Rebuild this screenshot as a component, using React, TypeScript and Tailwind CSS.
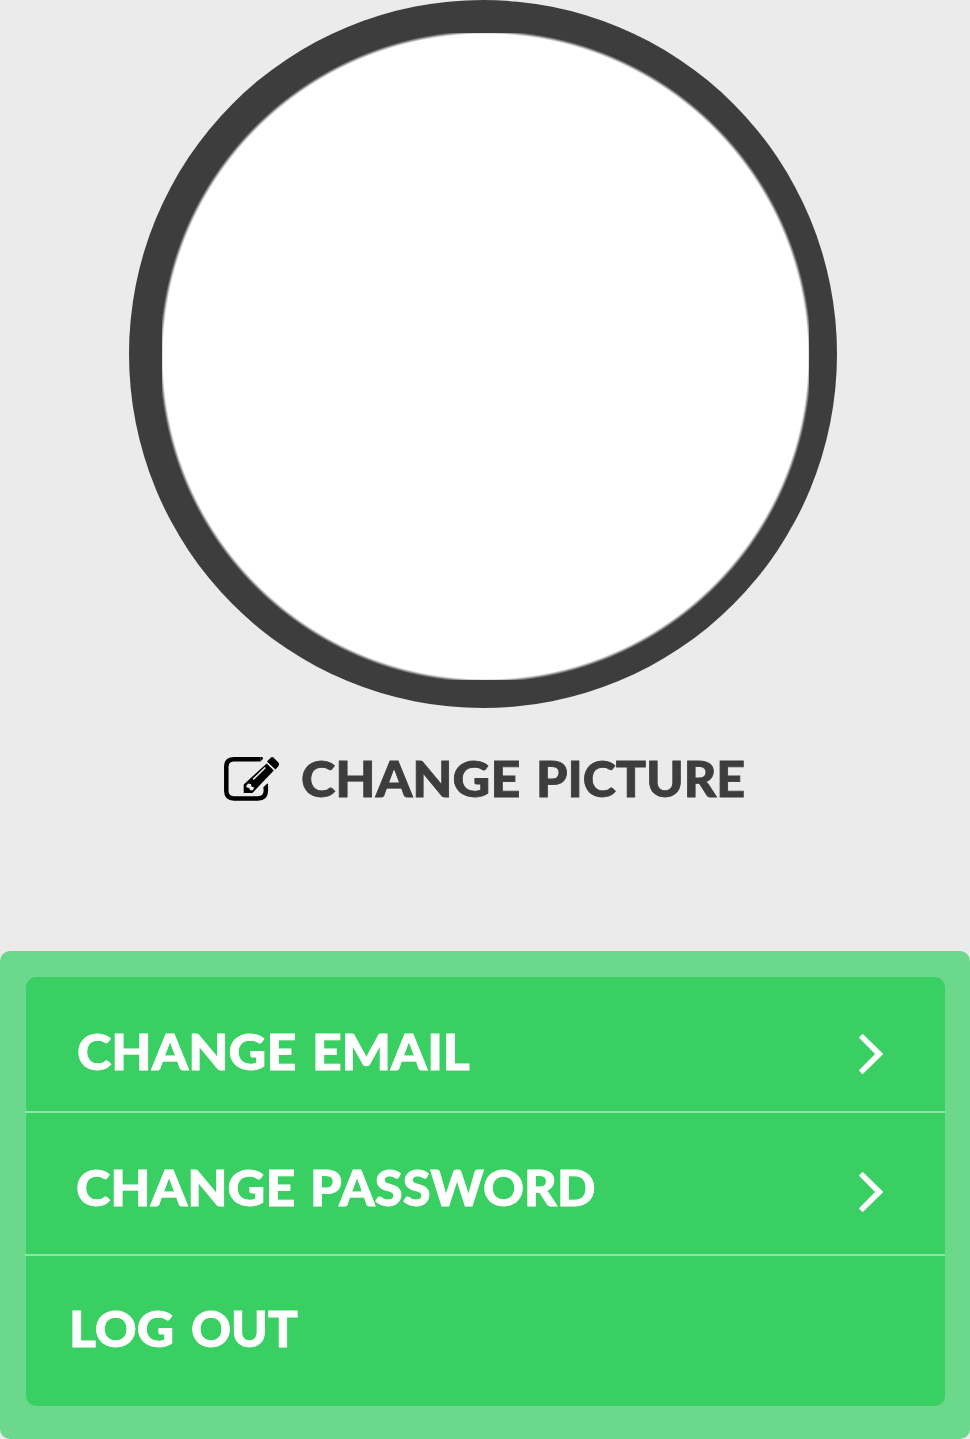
const LABEL =
  "font-['Lato',sans-serif] font-black text-[48.5px] leading-[60px] whitespace-nowrap [-webkit-text-stroke:0.8px_currentColor]";

function Chevron() {
  return (
    <svg className="h-[42px] w-[26px] shrink-0" viewBox="0 0 26 42">
      <path
        d="M1.700 4.500L4.700 1.600L24.400 21L4.700 40.400L1.700 37.500L18 21Z"
        fill="#ffffff"
        stroke="#ffffff"
        strokeWidth="1.200"
        strokeLinejoin="round"
      />
    </svg>
  );
}

function EditIcon() {
  return (
    <svg className="h-[46px] w-[57px] shrink-0" viewBox="0 0 57 46">
      <path
        d="M36.500 3.200H10Q2.300 3.200 2.300 10.500V35Q2.300 42.400 10 42.400H34Q41.800 42.400 41.800 35V31.500"
        fill="none"
        stroke="#000000"
        strokeWidth="4.500"
      />
      <path fill="#000000" d="M36.400 .95H38.400L39.200 2.400L36.400 5.450Z" />
      <path fill="#000000" d="M39.550 31L43 27.700Q44.050 27.300 44.050 28.500V32.500H39.550Z" />
      <path
        fillRule="evenodd"
        fill="#000000"
        d="M42.700 7.500L49.800 14.600L28.400 37L19.700 37L19.700 28.500ZM28.600 22.800L40.800 10.900L41.900 12L29.700 24ZM24.400 27.500L27 28.300L27.700 30.800L30.300 31.500L28.800 34.300L26.300 34.300L25 31.900L22.300 31.200L22.500 29.200Z"
      />
      <path fill="#000000" d="M43 5.500L46.400 1.900Q48.200 .3 49.900 1.900L54.100 6.200Q55.800 8.200 54.500 10L51.400 13.400Z" />
    </svg>
  );
}

export default function App() {
  return (
    <main className="flex h-[1439px] w-[970px] flex-col overflow-hidden bg-[#ebebeb]">
      <div className="ml-[129px] h-[708px] w-[708px] shrink-0 rounded-full bg-[#3d3d3d] pt-[33px] pl-[33px]">
        <div className="size-[647px] bg-[radial-gradient(circle_at_center,#fff_322.500px,transparent_326px)]" />
      </div>

      <button className="mt-[40px] ml-[224px] flex h-[60px] shrink-0 items-center self-start">
        <span className="mt-[2px]"><EditIcon /></span>
        <span className={`${LABEL} ml-[20px] flex gap-[31px] text-[#3d3d3d]`}>
          <span className="origin-left scale-x-[1.075]">CHANGE</span>
          <span className="origin-left scale-x-[1.036]">PICTURE</span>
        </span>
      </button>

      <section className="mt-[143px] h-[488px] shrink-0 rounded-[10px] bg-[#6bd88b] pt-[26px] pr-[25px] pl-[25px]">
        <nav className="flex h-[429px] flex-col">
          <button className="ml-px flex h-[134px] items-start justify-between rounded-t-[10px] bg-[#3acf63] pt-[44px] pr-[61px] pl-[51px] text-white">
            <span className={`${LABEL} flex gap-[31px]`}>
              <span className="origin-left scale-x-[1.075]">CHANGE</span>
              <span className="origin-left scale-x-[1.066]">EMAIL</span>
            </span>
            <span className="mt-[12px]"><Chevron /></span>
          </button>
          <div className="h-[2px] shrink-0 bg-[#90e4a9]" />
          <button className="ml-px flex h-[141px] items-start justify-between bg-[#3acf63] pt-[44px] pr-[61px] pl-[50px] text-white">
            <span className={`${LABEL} flex gap-[30px]`}>
              <span className="origin-left scale-x-[1.075]">CHANGE</span>
              <span className="origin-left scale-x-[1.044]">PASSWORD</span>
            </span>
            <span className="mt-[14px]"><Chevron /></span>
          </button>
          <div className="h-[2px] shrink-0 bg-[#90e4a9]" />
          <button className="ml-px flex h-[150px] items-start rounded-b-[10px] bg-[#3acf63] pt-[42px] pl-[43px] text-white">
            <span className={`${LABEL} flex gap-[23px]`}>
              <span className="origin-left scale-x-[1.065]">LOG</span>
              <span className="origin-left scale-x-[1.02]">OUT</span>
            </span>
          </button>
        </nav>
      </section>
    </main>
  );
}
